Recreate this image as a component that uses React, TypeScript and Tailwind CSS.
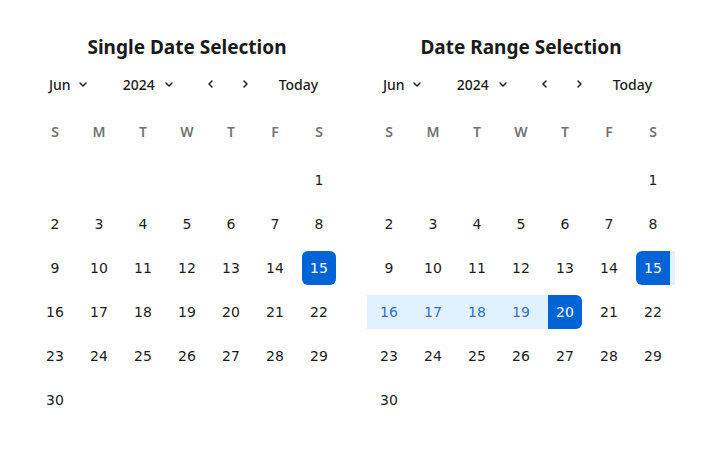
import React from "react";

const DAYS = ["S", "M", "T", "W", "T", "F", "S"];

// June 2024 starts on a Saturday
const weeks: (number | null)[][] = [
  [null, null, null, null, null, null, 1],
  [2, 3, 4, 5, 6, 7, 8],
  [9, 10, 11, 12, 13, 14, 15],
  [16, 17, 18, 19, 20, 21, 22],
  [23, 24, 25, 26, 27, 28, 29],
  [30, null, null, null, null, null, null],
];

const Chevron = ({ dir }: { dir: "down" | "left" | "right" }) => {
  const d =
    dir === "down" ? "M2 4l3 3 3-3" : dir === "left" ? "M6 2L3 5l3 3" : "M4 2l3 3-3 3";
  return (
    <svg width="10" height="10" viewBox="0 0 10 10" fill="none">
      <path d={d} stroke="#222" strokeWidth="1.5" strokeLinecap="round" strokeLinejoin="round" />
    </svg>
  );
};

const DayCell: React.FC<{ day: number | null; mode: "single" | "range" }> = ({ day, mode }) => {
  if (day === null) return <div className="h-[34px] w-[44px]" />;

  const start = 15;
  const end = 20;
  const single = mode === "single" && day === 15;
  const isStart = mode === "range" && day === start;
  const isEnd = mode === "range" && day === end;
  const inRange = mode === "range" && day > start && day < end;

  let wrap = "h-[34px] w-[44px] flex items-center justify-center";
  if (isStart) wrap += " bg-[linear-gradient(to_right,transparent_50%,#e1f1ff_50%)]";
  if (isEnd) wrap += " bg-[linear-gradient(to_right,#e1f1ff_50%,transparent_50%)]";
  if (inRange) wrap += " bg-[#e1f1ff]";

  let inner = "h-[34px] w-[34px] flex items-center justify-center text-[14px]";
  if (single) inner += " bg-[#0064d6] text-white rounded-[6px]";
  else if (isStart) inner += " bg-[#0064d6] text-white rounded-l-[6px]";
  else if (isEnd) inner += " bg-[#0064d6] text-white rounded-r-[6px]";
  else if (inRange) inner += " text-[#2c72d2]";
  else inner += " text-[#1c1c1c]";

  return (
    <div className={wrap}>
      <div className={inner}>{day}</div>
    </div>
  );
};

const Calendar: React.FC<{ title: string; mode: "single" | "range" }> = ({ title, mode }) => (
  <div className="w-[308px] flex flex-col">
    <h2 className="text-center text-[19px] font-bold text-[#1a1a1a] h-[22px] leading-[22px] mt-[36px]">{title}</h2>
    <div className="flex items-center h-[20px] mt-[16px] text-[14px] text-[#1a1a1a] font-medium">
      <span className="ml-[16px]">Jun</span>
      <span className="ml-[7px]"><Chevron dir="down" /></span>
      <span className="ml-[35px]">2024</span>
      <span className="ml-[9px]"><Chevron dir="down" /></span>
      <span className="ml-[32px]"><Chevron dir="left" /></span>
      <span className="ml-[24px]"><Chevron dir="right" /></span>
      <span className="ml-[29px]">Today</span>
    </div>
    <div className="grid grid-cols-7 mt-[27px] h-[20px] items-center">
      {DAYS.map((d, i) => (
        <div key={i} className="text-center text-[14px] font-semibold text-[#737373]">{d}</div>
      ))}
    </div>
    <div className="flex flex-col gap-[10px] mt-[22px]" style={{ fontFamily: '"DejaVu Sans", Verdana, sans-serif' }}>
      {weeks.map((w, i) => (
        <div key={i} className="flex">
          {w.map((d, j) => (
            <DayCell key={j} day={d} mode={mode} />
          ))}
        </div>
      ))}
    </div>
  </div>
);

export default function App() {
  return (
    <div className="w-[708px] h-[456px] bg-white flex gap-[26px] pl-[33px] font-['Noto_Sans','Lato',sans-serif]">
      <Calendar title="Single Date Selection" mode="single" />
      <Calendar title="Date Range Selection" mode="range" />
    </div>
  );
}
